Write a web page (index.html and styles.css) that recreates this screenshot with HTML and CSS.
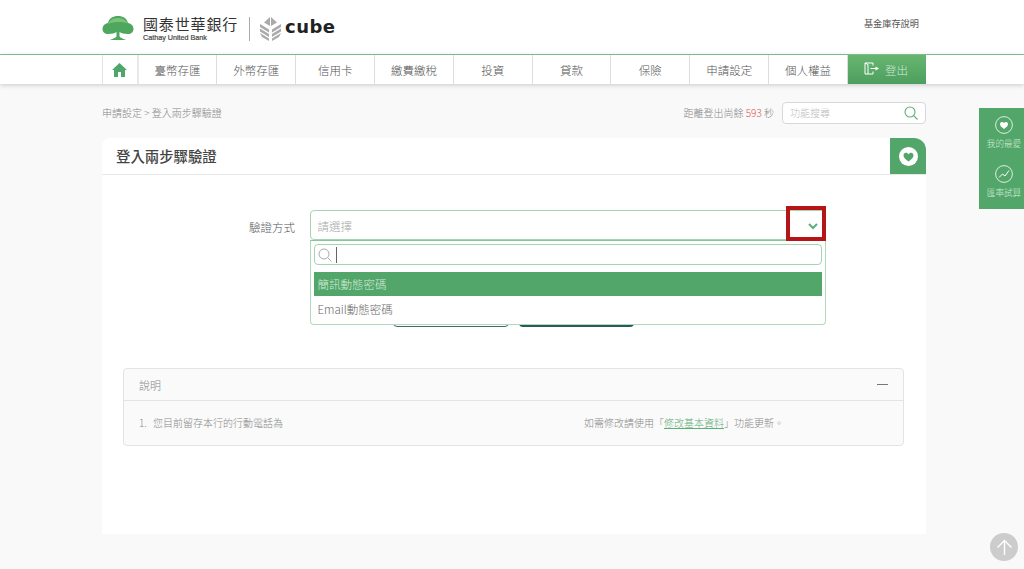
FILE: index.html
```html
<!DOCTYPE html>
<html lang="zh-Hant">
<head>
<meta charset="utf-8">
<title>登入兩步驟驗證</title>
<link rel="stylesheet" href="styles.css">
</head>
<body>
<header class="top">
  <div class="wrap top-in">
    <div class="logo">
      <svg class="tree" width="32" height="24" viewBox="0 0 32 24"><path fill="#4ea65f" d="M.5 13C.5 9.500 3 7.500 6 7 7 2.500 11 0 16 0s9 2.500 10 7c3 .5 5.500 2.500 5.500 6 0 3-2.500 5-5.500 5-4 0-7-1-8.500-2v4c0 1 1.500 2 6.500 4H8c5-2 6.500-3 6.500-4v-4c-1.500 1-4.500 2-8.500 2-3 0-5.500-2-5.500-5z"/><path fill="#7cc277" d="M6 8c2.500-4.500 6-6 10-6s7.500 1.500 10 5.500C20 5.500 12 5.500 6 8z"/></svg>
      <div class="bank">
        <span class="bank-zh">國泰世華銀行</span>
        <span class="bank-en">Cathay United Bank</span>
      </div>
      <span class="logo-rule"></span>
      <svg class="cube-mark" width="21" height="24" viewBox="0 0 21 24"><path fill="#aaa" d="M10 0v9L4 5.500zM11 0l6 5.500-6 3.500zM0 7l9 5.500v3L0 10zM0 11.500l9 5.500v3L0 14.500zM0 16l9 5.500V24L2 20zM21 7l-9 5.500v3L21 10zM21 11.500L12 17v3l9-5.500zM21 16l-9 5.500V24l7-4z"/></svg>
      <span class="cube-word">cube</span>
    </div>
    <a class="help">基金庫存說明</a>
  </div>
</header>
<nav class="nav">
  <div class="wrap nav-in">
    <a class="nav-home"><svg width="15" height="14" viewBox="0 0 15 14"><path fill="#4fa66a" d="M7.500 0L15 7h-2v7H9V9H6v5H2V7H0z"/></svg></a>
    <a class="nav-item">臺幣存匯</a>
    <a class="nav-item">外幣存匯</a>
    <a class="nav-item">信用卡</a>
    <a class="nav-item">繳費繳稅</a>
    <a class="nav-item">投資</a>
    <a class="nav-item">貸款</a>
    <a class="nav-item">保險</a>
    <a class="nav-item">申請設定</a>
    <a class="nav-item">個人權益</a>
    <a class="nav-out"><svg width="15" height="13" viewBox="0 0 15 13"><path fill="none" stroke="#fff" stroke-width="1" d="M9 3.500V1H1v11h8V9.500M1 1l3 1.500v9.500M6.500 6.500H12"/><path fill="#fff" d="M11.500 4.500L15 6.500l-3.500 2z"/></svg><span>登出</span></a>
  </div>
</nav>
<main class="wrap">
  <div class="crumbs">
    <span class="crumb-text">申請設定 &gt; 登入兩步驟驗證</span>
    <div class="crumb-right">
      <span class="timer">距離登出尚餘 <b class="secs">593</b> 秒</span>
      <div class="search">
        <span class="search-ph">功能搜尋</span>
        <svg width="14" height="14" viewBox="0 0 14 14"><circle cx="6" cy="6" r="5" fill="none" stroke="#5fae7a" stroke-width="1.100"/><path d="M9.700 9.700L13.500 13.500" stroke="#5fae7a" stroke-width="1.100"/></svg>
      </div>
    </div>
  </div>
  <section class="card">
    <div class="card-head">
      <h1>登入兩步驟驗證</h1>
      <span class="fav"><svg width="19" height="19" viewBox="0 0 19 19"><circle cx="9.500" cy="9.500" r="9.500" fill="#fff"/><path fill="#52a66a" d="M9.500 14.500C6 12 4.500 10.300 4.500 8.200c0-1.500 1.100-2.500 2.400-2.500 1.100 0 2 .6 2.600 1.500.6-.9 1.500-1.500 2.600-1.500 1.300 0 2.400 1 2.400 2.500 0 2.100-1.500 3.800-5 6.300z"/></svg></span>
    </div>
    <div class="form-row">
      <label class="form-label">驗證方式</label>
      <div class="select-box">
        <div class="select">
          <span>請選擇</span>
          <svg class="chev" width="10" height="7" viewBox="0 0 10 7"><path d="M1 1l4 4 4-4" fill="none" stroke="#5fae7a" stroke-width="2"/></svg>
        </div>
        <span class="red-mark"></span>
        <div class="drop">
          <div class="drop-search">
            <svg width="14" height="14" viewBox="0 0 14 14"><circle cx="6" cy="6" r="5" fill="none" stroke="#aaa" stroke-width="1"/><path d="M9.700 9.700L13.500 13.500" stroke="#aaa"/></svg>
            <span class="caret"></span>
          </div>
          <div class="opt opt-on">簡訊動態密碼</div>
          <div class="opt">Email動態密碼</div>
        </div>
      </div>
    </div>
    <div class="btns">
      <span class="btn btn-line"></span>
      <span class="btn btn-fill"></span>
    </div>
    <div class="note">
      <div class="note-head"><span>說明</span><span class="minus"></span></div>
      <div class="note-body">
        <span class="note-a"><span class="note-num">1.</span>您目前留存本行的行動電話為</span>
        <span class="note-b">如需修改請使用「<a class="note-link">修改基本資料</a>」功能更新。</span>
      </div>
    </div>
  </section>
</main>
<aside class="side">
  <a class="side-item">
    <svg width="18" height="18" viewBox="0 0 18 18"><circle cx="9" cy="9" r="8.400" fill="none" stroke="#fff" stroke-width=".8"/><path fill="#fff" d="M9 13C6.200 11 5 9.700 5 8c0-1.200.9-2 2-2 .8 0 1.500.4 2 1.100.5-.7 1.200-1.100 2-1.100 1.100 0 2 .8 2 2 0 1.700-1.200 3-4 5z"/></svg>
    <span>我的最愛</span>
  </a>
  <a class="side-item">
    <svg width="18" height="18" viewBox="0 0 18 18"><circle cx="9" cy="9" r="8.400" fill="none" stroke="#fff" stroke-width=".8"/><path fill="none" stroke="#fff" d="M4 12.500l3.500-3.500 2.500 2 4-5.500"/></svg>
    <span>匯率試算</span>
  </a>
</aside>
<a class="to-top"><svg width="17" height="17" viewBox="0 0 17 17"><path fill="none" stroke="#fff" stroke-width="1.400" d="M8.500 16V1.500M1.500 8.500l7-7 7 7"/></svg></a>
</body>
</html>
```

FILE: styles.css
```css
* { box-sizing: border-box; }
html, body { margin: 0; height: 569px; overflow: hidden; }
body {
  position: relative;
  background: #f9f9f9;
  color: #666;
  font-family: "Noto Sans CJK TC", "Open Sans", sans-serif;
  font-weight: 300;
  font-size: 10px;
}
.wrap { width: 824px; margin-left: 102px; }
.top { height: 55px; background: #fff; border-bottom: 1px solid #84c695; }
.top-in { display: flex; justify-content: space-between; height: 54px; }
.logo { display: flex; align-items: center; }
.tree { margin-right: 9px; margin-top: 2px; }
.bank { display: flex; flex-direction: column; width: 96px; margin-top: 2px; }
.bank-zh { font-size: 15px; line-height: 19px; font-weight: 400; color: #333; letter-spacing: .85px; white-space: nowrap; }
.bank-en { font-family: "Liberation Sans", sans-serif; font-size: 7.200px; line-height: 10px; font-weight: 400; color: #444; white-space: nowrap; -webkit-text-stroke: .2px #444; }
.logo-rule { width: 1px; height: 24px; background: #aaa; margin: 3px 10px 0; }
.cube-mark { margin: 3px 4px 0 0; }
.cube-word { font-family: "DejaVu Sans", sans-serif; font-size: 18px; line-height: 24px; font-weight: 700; color: #222; letter-spacing: .5px; }
.help { font-size: 9.200px; line-height: 14px; color: #555; font-weight: 400; margin: 16px 7px 0 0; }
.nav { height: 29px; background: #fff; box-shadow: 0 1px 5px rgba(0,0,0,.2); position: relative; }
.nav-in { display: flex; height: 29px; border-left: 1px solid #e3e3e3; }
.nav-home { width: 35.700px; display: flex; align-items: center; justify-content: center; border-right: 2px solid #e9e9e9; }
.nav-item { width: 78.800px; display: flex; align-items: center; justify-content: center; font-size: 11.500px; color: #555; border-right: 1px solid #ddd; }
.nav-out { flex: 1; display: flex; align-items: center; justify-content: center; gap: 6px; color: #cfe8d5; font-size: 11.500px; background: linear-gradient(#67b56f, #4d9f60); padding-right: 2px; }
.nav-out svg { margin-top: -3px; }
.crumbs { display: flex; justify-content: space-between; align-items: center; height: 22px; margin-top: 18px; }
.crumb-text { color: #888; font-size: 10px; margin-top: -2px; }
.crumb-right { display: flex; align-items: center; gap: 8px; }
.timer { color: #888; font-size: 10px; margin-top: -2px; }
.secs { color: #d9534f; font-weight: 300; }
.search { width: 144px; height: 22px; background: #fff; border: 1px solid #d8d8d8; border-radius: 4px; display: flex; align-items: center; justify-content: space-between; padding: 0 7px; color: #bbb; }
.search-ph { margin-top: -2px; }
.card { height: 396px; margin-top: 14px; background: #fff; border-radius: 8px 12px 0 0; }
.card-head { height: 37px; display: flex; justify-content: space-between; border-bottom: 1px solid #e8e8e8; }
.card-head h1 { margin: 0; padding-left: 14px; font-size: 14.400px; line-height: 36px; font-weight: 500; color: #444; }
.fav { width: 36px; height: 36px; background: #52a66a; border-radius: 0 12px 0 0; display: flex; align-items: center; justify-content: center; }
.form-row { display: flex; height: 30px; margin-top: 35px; }
.form-label { width: 193px; height: 30px; text-align: right; font-size: 11.500px; line-height: 34px; color: #555; font-weight: 300; }
.select-box { position: relative; width: 516.500px; margin-left: 14.500px; height: 30px; }
.select { height: 30px; border: 1px solid #a4d4b0; border-radius: 4px; display: flex; align-items: center; justify-content: space-between; padding: 1px 7px 0; color: #aaa; font-size: 11.500px; }
.chev { margin-top: 1px; }
.red-mark { position: absolute; left: 476px; top: -4px; width: 40px; height: 35px; border: 4px solid #b51516; z-index: 3; }
.drop { position: absolute; left: 0; top: 30px; width: 516.500px; height: 85px; background: #fff; border: 1px solid #b0dabb; border-top-color: #84c695; border-radius: 0 0 4px 4px; padding: 3px 3px 0; z-index: 2; }
.drop-search { height: 21px; border: 1px solid #a4d4b0; border-radius: 4px; display: flex; align-items: center; gap: 4px; padding-left: 3px; }
.caret { width: 1px; height: 16px; background: #666; }
.opt { height: 25px; padding-left: 4px; font-size: 11.500px; line-height: 25px; color: #666; }
.opt-on { height: 24px; line-height: 24px; margin: 7px 0 1px; background: #52a66a; color: #d5ecda; }
.btns { display: flex; gap: 10px; margin: 60px 0 0 291px; }
.btn { width: 116px; height: 27px; border-radius: 4px; }
.btn-line { border: 1px solid #43666a; background: #fff; }
.btn-fill { width: 115px; background: #2b5a5c; }
.note { margin: 41px 22px 0 21px; height: 78px; background: #fafafa; border: 1px solid #e3e3e3; border-radius: 4px; }
.note-head { height: 32px; display: flex; align-items: center; justify-content: space-between; padding: 0 15px; border-bottom: 1px solid #e3e3e3; font-size: 11px; color: #888; }
.minus { width: 11px; height: 1px; background: #777; }
.note-body { display: flex; padding: 13px 0 0 15px; line-height: 18px; color: #888; font-size: 10px; }
.note-a { width: 445px; }
.note-num { display: inline-block; width: 14px; }
.note-link { color: #5fae7a; text-decoration: underline; }
.side { position: absolute; right: 0; top: 108px; width: 45px; height: 101px; background: #52a66a; display: flex; flex-direction: column; align-items: center; padding: 8px 0 0 5px; gap: 16px; }
.side-item { display: flex; flex-direction: column; align-items: center; gap: 3px; color: #d5ecda; font-size: 8.600px; line-height: 12px; white-space: nowrap; }
.to-top { position: absolute; left: 990px; top: 533px; width: 28px; height: 28px; border-radius: 50%; background: #ccc; display: flex; align-items: center; justify-content: center; }
```
